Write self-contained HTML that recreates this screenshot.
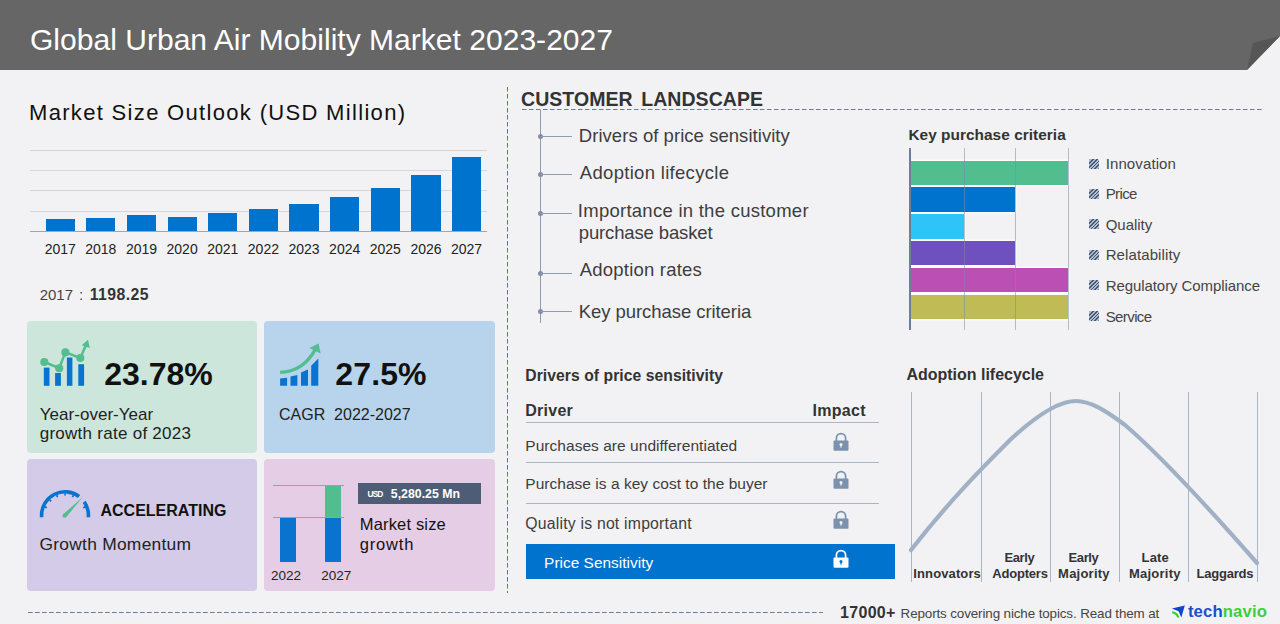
<!DOCTYPE html>
<html><head><meta charset="utf-8"><title>Global Urban Air Mobility Market 2023-2027</title>
<style>
html,body{margin:0;padding:0;}
body{width:1280px;height:624px;overflow:hidden;background:#f2f2f4;position:relative;font-family:"Liberation Sans",sans-serif;}
.t{position:absolute;line-height:1;white-space:pre;}
.r{position:absolute;}
</style></head><body>
<svg class="r" style="left:0;top:0" width="1280" height="72"><polygon points="0,0 1280,0 1280,36 1247,70 0,70" fill="#666666"/><polygon points="1247,70 1253,43 1280,36" fill="#565656"/></svg>
<div class="t" style="left:30.00px;top:24.80px;font-size:30px;font-weight:400;color:#ffffff;letter-spacing:0.024px;">Global Urban Air Mobility Market 2023-2027</div>
<div class="t" style="left:29.00px;top:101.58px;font-size:22px;font-weight:400;color:#111;letter-spacing:1.322px;">Market Size Outlook (USD Million)</div>
<div class="r" style="left:30.00px;top:150.00px;width:457.00px;height:1.00px;background:#d6d6dc;"></div>
<div class="r" style="left:30.00px;top:170.00px;width:457.00px;height:1.00px;background:#d6d6dc;"></div>
<div class="r" style="left:30.00px;top:190.00px;width:457.00px;height:1.00px;background:#d6d6dc;"></div>
<div class="r" style="left:30.00px;top:211.00px;width:457.00px;height:1.00px;background:#d6d6dc;"></div>
<div class="r" style="left:30.00px;top:231.00px;width:457.00px;height:1.20px;background:#a4a4ac;"></div>
<div class="r" style="left:45.60px;top:219.40px;width:29.20px;height:11.60px;background:#0073cf;"></div>
<div class="t" style="left:-239.80px;width:600px;text-align:center;top:242.35px;font-size:14px;font-weight:400;color:#222;">2017</div>
<div class="r" style="left:86.24px;top:217.70px;width:29.20px;height:13.30px;background:#0073cf;"></div>
<div class="t" style="left:-199.16px;width:600px;text-align:center;top:242.35px;font-size:14px;font-weight:400;color:#222;">2018</div>
<div class="r" style="left:126.88px;top:215.40px;width:29.20px;height:15.60px;background:#0073cf;"></div>
<div class="t" style="left:-158.52px;width:600px;text-align:center;top:242.35px;font-size:14px;font-weight:400;color:#222;">2019</div>
<div class="r" style="left:167.52px;top:216.70px;width:29.20px;height:14.30px;background:#0073cf;"></div>
<div class="t" style="left:-117.88px;width:600px;text-align:center;top:242.35px;font-size:14px;font-weight:400;color:#222;">2020</div>
<div class="r" style="left:208.16px;top:212.90px;width:29.20px;height:18.10px;background:#0073cf;"></div>
<div class="t" style="left:-77.24px;width:600px;text-align:center;top:242.35px;font-size:14px;font-weight:400;color:#222;">2021</div>
<div class="r" style="left:248.80px;top:209.20px;width:29.20px;height:21.80px;background:#0073cf;"></div>
<div class="t" style="left:-36.60px;width:600px;text-align:center;top:242.35px;font-size:14px;font-weight:400;color:#222;">2022</div>
<div class="r" style="left:289.44px;top:204.20px;width:29.20px;height:26.80px;background:#0073cf;"></div>
<div class="t" style="left:4.04px;width:600px;text-align:center;top:242.35px;font-size:14px;font-weight:400;color:#222;">2023</div>
<div class="r" style="left:330.08px;top:196.90px;width:29.20px;height:34.10px;background:#0073cf;"></div>
<div class="t" style="left:44.68px;width:600px;text-align:center;top:242.35px;font-size:14px;font-weight:400;color:#222;">2024</div>
<div class="r" style="left:370.72px;top:187.70px;width:29.20px;height:43.30px;background:#0073cf;"></div>
<div class="t" style="left:85.32px;width:600px;text-align:center;top:242.35px;font-size:14px;font-weight:400;color:#222;">2025</div>
<div class="r" style="left:411.36px;top:174.60px;width:29.20px;height:56.40px;background:#0073cf;"></div>
<div class="t" style="left:125.96px;width:600px;text-align:center;top:242.35px;font-size:14px;font-weight:400;color:#222;">2026</div>
<div class="r" style="left:452.00px;top:157.30px;width:29.20px;height:73.70px;background:#0073cf;"></div>
<div class="t" style="left:166.60px;width:600px;text-align:center;top:242.35px;font-size:14px;font-weight:400;color:#222;">2027</div>
<div class="t" style="left:39.70px;top:287.30px;font-size:15px;font-weight:400;color:#444;letter-spacing:0.000px;">2017</div>
<div class="t" style="left:79.00px;top:287.30px;font-size:15px;font-weight:400;color:#444;">:</div>
<div class="t" style="left:89.70px;top:286.63px;font-size:15.8px;font-weight:700;color:#333;letter-spacing:0.433px;">1198.25</div>
<div class="r" style="left:27.00px;top:321.00px;width:230.00px;height:132.00px;background:#cce6dc;border-radius:4px;"></div>
<div class="r" style="left:264.00px;top:321.00px;width:231.00px;height:132.00px;background:#b7d4ec;border-radius:4px;"></div>
<div class="r" style="left:27.00px;top:459.00px;width:230.00px;height:132.00px;background:#d3cbe8;border-radius:4px;"></div>
<div class="r" style="left:264.00px;top:459.00px;width:231.00px;height:132.00px;background:#e6cde6;border-radius:4px;"></div>
<svg class="r" style="left:0;top:0" width="500" height="600">
<g fill="#0a72cf">
<rect x="43.8" y="367.6" width="5.7" height="18.2"/>
<rect x="55.1" y="373" width="5.8" height="12.8"/>
<rect x="66.9" y="357.5" width="5.5" height="28.3"/>
<rect x="78.3" y="364.2" width="5.8" height="21.6"/>
</g>
<g fill="#52bd8f" stroke="#52bd8f">
<polyline points="44.3,362 59.2,368.2 65.4,352.4 80.3,358 85.6,346" fill="none" stroke-width="2.5"/>
<circle cx="44.3" cy="362" r="4.05" stroke="none"/>
<circle cx="59.2" cy="368.2" r="4.05" stroke="none"/>
<circle cx="65.4" cy="352.4" r="4.05" stroke="none"/>
<circle cx="80.3" cy="358" r="4.05" stroke="none"/>
<polygon points="88,339.8 89.8,348 81.8,345.2" stroke="none"/>
</g>
</svg>
<div class="t" style="left:104.20px;top:358.11px;font-size:32px;font-weight:700;color:#111;letter-spacing:-0.000px;">23.78%</div>
<div class="t" style="left:39.70px;top:405.61px;font-size:17px;font-weight:400;color:#222;letter-spacing:0.038px;">Year-over-Year</div>
<div class="t" style="left:39.70px;top:425.01px;font-size:17px;font-weight:400;color:#222;letter-spacing:0.267px;">growth rate of 2023</div>
<svg class="r" style="left:0;top:0" width="500" height="600">
<g fill="#0a72cf">
<polygon points="280.1,378.5 287.1,377.8 287.1,385.8 280.1,385.8"/>
<polygon points="290.5,376.6 297.4,375 297.4,385.8 290.5,385.8"/>
<polygon points="301,372.5 308,369.6 308,385.8 301,385.8"/>
<polygon points="311.2,365.8 318.3,358.5 318.3,385.8 311.2,385.8"/>
</g>
<path d="M280.1,372.4 C 293,372 306,366 315,350" fill="none" stroke="#52bd8f" stroke-width="3.4"/>
<polygon points="318.6,343.5 320.6,353.5 309.5,348" fill="#52bd8f"/>
</svg>
<div class="t" style="left:335.30px;top:357.81px;font-size:32px;font-weight:700;color:#111;letter-spacing:0.125px;">27.5%</div>
<div class="t" style="left:279.00px;top:406.66px;font-size:16px;font-weight:400;color:#222;letter-spacing:0.000px;">CAGR  2022-2027</div>
<svg class="r" style="left:0;top:0" width="500" height="600">
<path d="M41.60,517.2 L41.60,515.20 A 23.4 23.4 0 0 1 79.08,496.51" fill="none" stroke="#0a72cf" stroke-width="3.6"/>
<path d="M84.17,501.78 A 23.4 23.4 0 0 1 88.40,515.20 L88.40,517.2" fill="none" stroke="#0a72cf" stroke-width="3.6"/>
<line x1="85.14" y1="506.86" x2="83.11" y2="507.70" stroke="#0a72cf" stroke-width="1.7"/><line x1="73.34" y1="495.06" x2="72.50" y2="497.09" stroke="#0a72cf" stroke-width="1.7"/><line x1="65.00" y1="493.40" x2="65.00" y2="495.60" stroke="#0a72cf" stroke-width="1.7"/><line x1="56.66" y1="495.06" x2="57.50" y2="497.09" stroke="#0a72cf" stroke-width="1.7"/><line x1="49.59" y1="499.79" x2="51.14" y2="501.34" stroke="#0a72cf" stroke-width="1.7"/><line x1="44.86" y1="506.86" x2="46.89" y2="507.70" stroke="#0a72cf" stroke-width="1.7"/>
<polygon points="62.9,514.6 66.3,516.9 82.8,497.1" fill="#52bd8f"/>
<circle cx="64.6" cy="515.7" r="2.1" fill="#52bd8f"/>
</svg>
<div class="t" style="left:100.50px;top:503.46px;font-size:16px;font-weight:700;color:#111;letter-spacing:0.000px;">ACCELERATING</div>
<div class="t" style="left:39.40px;top:535.97px;font-size:17.4px;font-weight:400;color:#222;letter-spacing:0.271px;">Growth Momentum</div>
<div class="r" style="left:273.00px;top:485.00px;width:71.00px;height:1.00px;background:#979eb5;"></div>
<div class="r" style="left:273.00px;top:517.00px;width:71.00px;height:1.00px;background:#979eb5;"></div>
<div class="r" style="left:279.50px;top:517.50px;width:16.80px;height:44.50px;background:#0a72cf;"></div>
<div class="r" style="left:324.70px;top:517.50px;width:16.80px;height:44.50px;background:#0a72cf;"></div>
<div class="r" style="left:324.70px;top:485.50px;width:16.80px;height:31.80px;background:#52bd8f;"></div>
<div class="t" style="left:-14.00px;width:600px;text-align:center;top:568.57px;font-size:13.5px;font-weight:400;color:#222;">2022</div>
<div class="t" style="left:36.30px;width:600px;text-align:center;top:568.57px;font-size:13.5px;font-weight:400;color:#222;">2027</div>
<div class="r" style="left:357.90px;top:483.00px;width:123.10px;height:20.80px;background:#4e5d76;"></div>
<div class="t" style="left:367.50px;top:490.29px;font-size:8.4px;font-weight:700;color:#fff;letter-spacing:-0.950px;">USD</div>
<div class="t" style="left:390.80px;top:488.29px;font-size:12.3px;font-weight:700;color:#fff;letter-spacing:0.020px;">5,280.25 Mn</div>
<div class="t" style="left:359.80px;top:516.03px;font-size:16.5px;font-weight:400;color:#111;letter-spacing:0.160px;">Market size</div>
<div class="t" style="left:359.80px;top:535.53px;font-size:16.5px;font-weight:400;color:#111;letter-spacing:0.820px;">growth</div>
<div class="t" style="left:521.00px;top:90.09px;font-size:19.5px;font-weight:700;color:#333;word-spacing:3px;letter-spacing:0.059px;">CUSTOMER LANDSCAPE</div>
<svg class="r" style="left:0;top:0" width="1280" height="624"><line x1="522" y1="109.5" x2="1262" y2="109.5" stroke="#6b7c92" stroke-width="1" stroke-dasharray="4.5 2.5"/><line x1="507.5" y1="87" x2="507.5" y2="593" stroke="#5f7390" stroke-width="1" stroke-dasharray="4.5 2.5"/><line x1="28" y1="612.5" x2="823" y2="612.5" stroke="#6a7e98" stroke-width="1" stroke-dasharray="4.7 2.3"/></svg>
<div class="r" style="left:540.00px;top:110.00px;width:1.00px;height:212.50px;background:#8f9bae;"></div>
<div class="r" style="left:537.6px;top:133.80px;width:5px;height:5px;border-radius:50%;background:#7f8da2"></div>
<div class="r" style="left:540.00px;top:135.80px;width:31.50px;height:1.00px;background:#8f9bae;"></div>
<div class="r" style="left:537.6px;top:171.70px;width:5px;height:5px;border-radius:50%;background:#7f8da2"></div>
<div class="r" style="left:540.00px;top:173.70px;width:31.50px;height:1.00px;background:#8f9bae;"></div>
<div class="r" style="left:537.6px;top:210.70px;width:5px;height:5px;border-radius:50%;background:#7f8da2"></div>
<div class="r" style="left:540.00px;top:212.70px;width:31.50px;height:1.00px;background:#8f9bae;"></div>
<div class="r" style="left:537.6px;top:270.70px;width:5px;height:5px;border-radius:50%;background:#7f8da2"></div>
<div class="r" style="left:540.00px;top:272.70px;width:31.50px;height:1.00px;background:#8f9bae;"></div>
<div class="r" style="left:537.6px;top:308.80px;width:5px;height:5px;border-radius:50%;background:#7f8da2"></div>
<div class="r" style="left:540.00px;top:310.80px;width:31.50px;height:1.00px;background:#8f9bae;"></div>
<div class="t" style="left:578.80px;top:126.94px;font-size:18.5px;font-weight:400;color:#3d3d3d;letter-spacing:0.048px;">Drivers of price sensitivity</div>
<div class="t" style="left:579.80px;top:164.34px;font-size:18.5px;font-weight:400;color:#3d3d3d;letter-spacing:0.306px;">Adoption lifecycle</div>
<div class="t" style="left:577.80px;top:201.54px;font-size:18.5px;font-weight:400;color:#3d3d3d;letter-spacing:0.264px;">Importance in the customer</div>
<div class="t" style="left:578.80px;top:224.24px;font-size:18.5px;font-weight:400;color:#3d3d3d;letter-spacing:-0.143px;">purchase basket</div>
<div class="t" style="left:579.80px;top:261.24px;font-size:18.5px;font-weight:400;color:#3d3d3d;letter-spacing:0.208px;">Adoption rates</div>
<div class="t" style="left:578.80px;top:302.94px;font-size:18.5px;font-weight:400;color:#3d3d3d;letter-spacing:-0.065px;">Key purchase criteria</div>
<div class="t" style="left:908.40px;top:127.16px;font-size:15.4px;font-weight:700;color:#333;letter-spacing:0.040px;">Key purchase criteria</div>
<div class="r" style="left:911.00px;top:160.80px;width:157.00px;height:24.10px;background:#52bd8f;box-shadow:0 0 0 1.4px #ffffff;"></div>
<div class="r" style="left:911.00px;top:187.00px;width:104.00px;height:24.80px;background:#0073cf;box-shadow:0 0 0 1.4px #ffffff;"></div>
<div class="r" style="left:911.00px;top:214.00px;width:53.00px;height:24.60px;background:#2ec4fa;box-shadow:0 0 0 1.4px #ffffff;"></div>
<div class="r" style="left:911.00px;top:241.20px;width:104.00px;height:23.40px;background:#6e50bf;box-shadow:0 0 0 1.4px #ffffff;"></div>
<div class="r" style="left:911.00px;top:268.20px;width:157.00px;height:23.40px;background:#bb4fb3;box-shadow:0 0 0 1.4px #ffffff;"></div>
<div class="r" style="left:911.00px;top:295.20px;width:157.00px;height:23.50px;background:#bfbb55;box-shadow:0 0 0 1.4px #ffffff;"></div>
<div class="r" style="left:964.10px;top:148.00px;width:1.00px;height:182.00px;background:rgba(120,140,168,0.55);"></div>
<div class="r" style="left:1014.90px;top:148.00px;width:1.00px;height:182.00px;background:rgba(120,140,168,0.55);"></div>
<div class="r" style="left:1068.10px;top:148.00px;width:1.00px;height:182.00px;background:rgba(120,140,168,0.55);"></div>
<div class="r" style="left:909.00px;top:148.00px;width:2.00px;height:182.00px;background:#6b7f9a;"></div>
<div class="r" style="left:1089px;top:159.00px;width:10px;height:10px;border-radius:1.5px;background:repeating-linear-gradient(135deg,#4d596b 0 1.2px,#a9bcd5 1.2px 2.6px)"></div>
<div class="t" style="left:1105.70px;top:156.30px;font-size:15px;font-weight:400;color:#444;letter-spacing:0.111px;">Innovation</div>
<div class="r" style="left:1089px;top:188.80px;width:10px;height:10px;border-radius:1.5px;background:repeating-linear-gradient(135deg,#4d596b 0 1.2px,#a9bcd5 1.2px 2.6px)"></div>
<div class="t" style="left:1105.70px;top:186.30px;font-size:15px;font-weight:400;color:#444;letter-spacing:-0.625px;">Price</div>
<div class="r" style="left:1089px;top:219.30px;width:10px;height:10px;border-radius:1.5px;background:repeating-linear-gradient(135deg,#4d596b 0 1.2px,#a9bcd5 1.2px 2.6px)"></div>
<div class="t" style="left:1105.70px;top:217.00px;font-size:15px;font-weight:400;color:#444;letter-spacing:-0.017px;">Quality</div>
<div class="r" style="left:1089px;top:249.60px;width:10px;height:10px;border-radius:1.5px;background:repeating-linear-gradient(135deg,#4d596b 0 1.2px,#a9bcd5 1.2px 2.6px)"></div>
<div class="t" style="left:1105.70px;top:247.30px;font-size:15px;font-weight:400;color:#444;letter-spacing:0.100px;">Relatability</div>
<div class="r" style="left:1089px;top:279.50px;width:10px;height:10px;border-radius:1.5px;background:repeating-linear-gradient(135deg,#4d596b 0 1.2px,#a9bcd5 1.2px 2.6px)"></div>
<div class="t" style="left:1105.70px;top:277.60px;font-size:15px;font-weight:400;color:#444;letter-spacing:-0.075px;">Regulatory Compliance</div>
<div class="r" style="left:1089px;top:310.90px;width:10px;height:10px;border-radius:1.5px;background:repeating-linear-gradient(135deg,#4d596b 0 1.2px,#a9bcd5 1.2px 2.6px)"></div>
<div class="t" style="left:1105.70px;top:308.70px;font-size:15px;font-weight:400;color:#444;letter-spacing:-0.600px;">Service</div>
<div class="t" style="left:525.30px;top:367.51px;font-size:15.7px;font-weight:700;color:#333;letter-spacing:0.056px;">Drivers of price sensitivity</div>
<div class="t" style="left:525.30px;top:402.66px;font-size:16px;font-weight:700;color:#333;letter-spacing:0.260px;">Driver</div>
<div class="t" style="left:812.60px;top:402.66px;font-size:16px;font-weight:700;color:#333;letter-spacing:0.260px;">Impact</div>
<div class="r" style="left:526.00px;top:422.40px;width:352.50px;height:1.00px;background:#a9b6c8;"></div>
<div class="r" style="left:526.00px;top:462.40px;width:352.50px;height:1.00px;background:#a9b6c8;"></div>
<div class="r" style="left:526.00px;top:502.50px;width:352.50px;height:1.00px;background:#a9b6c8;"></div>
<div class="t" style="left:525.30px;top:438.08px;font-size:15.5px;font-weight:400;color:#3d3d3d;letter-spacing:0.038px;">Purchases are undifferentiated</div>
<div class="t" style="left:525.30px;top:476.48px;font-size:15.5px;font-weight:400;color:#3d3d3d;letter-spacing:0.029px;">Purchase is a key cost to the buyer</div>
<div class="t" style="left:525.30px;top:515.83px;font-size:15.8px;font-weight:400;color:#3d3d3d;letter-spacing:0.204px;">Quality is not important</div>
<div class="r" style="left:526.00px;top:544.00px;width:368.50px;height:34.50px;background:#0073cf;"></div>
<div class="t" style="left:544.10px;top:554.86px;font-size:15.4px;font-weight:400;color:#ffffff;letter-spacing:0.031px;">Price Sensitivity</div>
<svg class="r" style="left:832.6px;top:431.5px" width="16" height="20"><path d="M3.4,9 V6.2 A4.6,4.6 0 0 1 12.6,6.2 V9" fill="none" stroke="#7b92ae" stroke-width="1.7"/><rect x="0.5" y="8.5" width="15" height="10.2" rx="1" fill="#7b92ae"/><circle cx="8" cy="12.6" r="1.5" fill="#f2f2f4"/><rect x="7.4" y="12.6" width="1.2" height="3" fill="#f2f2f4"/></svg>
<svg class="r" style="left:832.6px;top:469.5px" width="16" height="20"><path d="M3.4,9 V6.2 A4.6,4.6 0 0 1 12.6,6.2 V9" fill="none" stroke="#7b92ae" stroke-width="1.7"/><rect x="0.5" y="8.5" width="15" height="10.2" rx="1" fill="#7b92ae"/><circle cx="8" cy="12.6" r="1.5" fill="#f2f2f4"/><rect x="7.4" y="12.6" width="1.2" height="3" fill="#f2f2f4"/></svg>
<svg class="r" style="left:832.6px;top:509.5px" width="16" height="20"><path d="M3.4,9 V6.2 A4.6,4.6 0 0 1 12.6,6.2 V9" fill="none" stroke="#7b92ae" stroke-width="1.7"/><rect x="0.5" y="8.5" width="15" height="10.2" rx="1" fill="#7b92ae"/><circle cx="8" cy="12.6" r="1.5" fill="#f2f2f4"/><rect x="7.4" y="12.6" width="1.2" height="3" fill="#f2f2f4"/></svg>
<svg class="r" style="left:832.6px;top:548.5px" width="16" height="20"><path d="M3.4,9 V6.2 A4.6,4.6 0 0 1 12.6,6.2 V9" fill="none" stroke="#ffffff" stroke-width="1.7"/><rect x="0.5" y="8.5" width="15" height="10.2" rx="1" fill="#ffffff"/><circle cx="8" cy="12.6" r="1.5" fill="#0073cf"/><rect x="7.4" y="12.6" width="1.2" height="3" fill="#0073cf"/></svg>
<div class="t" style="left:906.50px;top:366.66px;font-size:16px;font-weight:700;color:#333;letter-spacing:-0.018px;">Adoption lifecycle</div>
<div class="r" style="left:910.70px;top:391.50px;width:1.00px;height:190.00px;background:#a9b6c8;"></div>
<div class="r" style="left:981.00px;top:391.50px;width:1.00px;height:190.00px;background:#a9b6c8;"></div>
<div class="r" style="left:1050.30px;top:391.50px;width:1.00px;height:190.00px;background:#a9b6c8;"></div>
<div class="r" style="left:1118.70px;top:391.50px;width:1.00px;height:190.00px;background:#a9b6c8;"></div>
<div class="r" style="left:1188.00px;top:391.50px;width:1.00px;height:190.00px;background:#a9b6c8;"></div>
<div class="r" style="left:1256.80px;top:391.50px;width:1.00px;height:190.00px;background:#a9b6c8;"></div>
<svg class="r" style="left:0;top:0" width="1280" height="624"><path d="M911,550 C 950,500 985,465 1010,440 C 1040,412 1062,401 1076,401 C 1090,401 1105,410 1125,425 C 1160,455 1200,498 1257,563" fill="none" stroke="#a0b1c6" stroke-width="4.2" stroke-linecap="round"/></svg>
<div class="t" style="left:913.30px;top:567.20px;font-size:13px;font-weight:700;color:#333;letter-spacing:0.122px;">Innovators</div>
<div class="t" style="left:1004.40px;top:551.20px;font-size:13px;font-weight:700;color:#333;letter-spacing:-0.375px;">Early</div>
<div class="t" style="left:992.20px;top:567.20px;font-size:13px;font-weight:700;color:#333;letter-spacing:-0.186px;">Adopters</div>
<div class="t" style="left:1068.50px;top:551.20px;font-size:13px;font-weight:700;color:#333;letter-spacing:-0.375px;">Early</div>
<div class="t" style="left:1058.10px;top:567.20px;font-size:13px;font-weight:700;color:#333;letter-spacing:0.229px;">Majority</div>
<div class="t" style="left:1141.60px;top:551.20px;font-size:13px;font-weight:700;color:#333;letter-spacing:0.133px;">Late</div>
<div class="t" style="left:1129.00px;top:567.20px;font-size:13px;font-weight:700;color:#333;letter-spacing:0.229px;">Majority</div>
<div class="t" style="left:1196.50px;top:567.20px;font-size:13px;font-weight:700;color:#333;letter-spacing:-0.229px;">Laggards</div>
<div class="t" style="left:840.00px;top:604.56px;font-size:16px;font-weight:700;color:#333;letter-spacing:0.320px;">17000+</div>
<div class="t" style="left:900.60px;top:606.76px;font-size:13.4px;font-weight:400;color:#444;letter-spacing:-0.114px;">Reports covering niche topics. Read them at</div>
<svg class="r" style="left:1165px;top:598px" width="30" height="24">
<polygon points="6.9,10.4 19.8,7.5 16.3,19.6 13.6,13.2" fill="#0d45cc"/>
<path d="M7.2,14.2 C 10,14.6 12.3,15.6 13.3,19.4" fill="none" stroke="#27d027" stroke-width="2.1"/>
</svg>
<div class="t" style="left:1187.90px;top:604.06px;font-size:16.7px;font-weight:700;color:#333;letter-spacing:0.137px;"><span style="color:#1a4fd0">tech</span><span style="color:#3ccf3c">navio</span></div>
</body></html>
